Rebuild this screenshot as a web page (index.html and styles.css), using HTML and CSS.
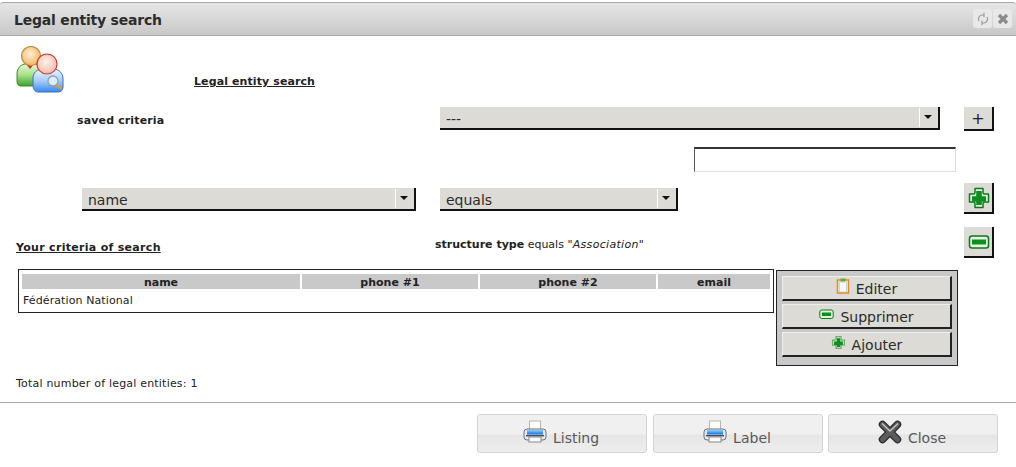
FILE: index.html
```html
<!DOCTYPE html>
<html lang="en">
<head>
<meta charset="utf-8">
<title>Legal entity search</title>
<link rel="stylesheet" href="styles.css">
</head>
<body>
<header class="titlebar">
  <h1 class="title">Legal entity search</h1>
  <div class="win-actions">
    <span class="win-btn"><svg width="14" height="14" viewBox="0 0 14 14"><path d="M3 9A4 4 0 0 1 6 3h2.500M11 5A4 4 0 0 1 8 11H5.500M8 .8v4.400M6 8.800v4.400" fill="none" stroke="#9a9a9a" stroke-width="1.200"/></svg></span>
    <span class="win-btn"><svg width="12" height="12" viewBox="0 0 12 12"><path d="M2 2l8 8M10 2l-8 8" stroke="#8a8a8a" stroke-width="3.200"/></svg></span>
  </div>
</header>
<main class="content">
  <div class="row row-head">
    <svg class="people" width="48" height="48" viewBox="0 0 48 48">
      <defs>
        <linearGradient id="g1" x1="0" y1="0" x2="0" y2="1"><stop offset="0" stop-color="#eaf8de"/><stop offset=".5" stop-color="#a8e088"/><stop offset="1" stop-color="#3fa030"/></linearGradient>
        <linearGradient id="g2" x1="0" y1="0" x2="0" y2="1"><stop offset="0" stop-color="#eef5ff"/><stop offset=".5" stop-color="#a8cdfb"/><stop offset="1" stop-color="#3a88f0"/></linearGradient>
        <radialGradient id="g3" cx=".45" cy=".4"><stop offset="0" stop-color="#fff0d4"/><stop offset="1" stop-color="#f4c078"/></radialGradient>
        <radialGradient id="g4" cx=".45" cy=".4"><stop offset="0" stop-color="#fff2ec"/><stop offset="1" stop-color="#f7c4b4"/></radialGradient>
      </defs>
      <path d="M1 35V28c0-6 4-10 9-10h8c6 0 10 4 10 10v8c0 3-2 4-4 4H5c-3 0-4-2-4-5z" fill="url(#g1)" stroke="#3f8a32"/>
      <path d="M10 18h8l-4 5z" fill="#d03020"/>
      <circle cx="15" cy="10" r="9.500" fill="url(#g3)" stroke="#c58a3a" stroke-width="1.200"/>
      <path d="M17 39V32c0-5 4-9 9-9h11c6 0 10 4 10 10v8c0 3-2 5-5 5H22c-3 0-5-3-5-7z" fill="url(#g2)" stroke="#3a70c0"/>
      <circle cx="31" cy="18" r="10" fill="url(#g4)" stroke="#d83a30" stroke-width="1.200"/>
      <circle cx="37" cy="35" r="5" fill="#dcecf8" stroke="#8aa0b5" stroke-width="1.300"/>
      <path d="M40.500 38.500l5 4.500" stroke="#e8a020" stroke-width="2.200"/>
    </svg>
    <h2 class="heading heading-main">Legal entity search</h2>
  </div>

  <div class="row row-saved">
    <span class="label">saved criteria</span>
    <div class="select select-wide"><span class="select-value">---</span><span class="select-arrow"></span></div>
    <button class="tool tool-small" type="button">+</button>
  </div>

  <div class="row row-input">
    <div class="textbox"></div>
  </div>

  <div class="row row-criteria">
    <div class="select select-field"><span class="select-value">name</span><span class="select-arrow"></span></div>
    <div class="select select-op"><span class="select-value">equals</span><span class="select-arrow"></span></div>
    <button class="tool tool-large" type="button">
      <svg width="24" height="24" viewBox="0 0 24 24"><path d="M8 2.500h8v4c0 1 .5 1.500 1.500 1.500h4v8h-4c-1 0-1.500.5-1.500 1.500v4H8v-4c0-1-.5-1.500-1.500-1.500h-4V8h4c1 0 1.500-.5 1.500-1.500z" fill="#e8f5e4" stroke="#0a7a18" stroke-width="1.500" stroke-linejoin="round"/><path d="M9.200 5h5.600v5.200H19v5.600h-4.200V19H9.200v-3.200H5v-5.600h4.200z" fill="#0c8f1e"/></svg>
    </button>
  </div>

  <div class="row row-summary">
    <h2 class="heading heading-criteria">Your criteria of search</h2>
    <p class="summary"><b>structure type</b> equals <i>"Association"</i></p>
    <button class="tool tool-large" type="button">
      <svg width="22" height="16" viewBox="0 0 22 16"><rect x="1.500" y="2" width="19" height="12" rx="2.500" fill="#e8f5e4" stroke="#0a7a18" stroke-width="1.500"/><rect x="4" y="5.500" width="14" height="5" fill="#0c8f1e"/></svg>
    </button>
  </div>

  <div class="row row-results">
    <div class="results">
      <table class="grid">
        <thead>
          <tr><th class="col-name">name</th><th class="col-phone">phone #1</th><th class="col-phone">phone #2</th><th class="col-email">email</th></tr>
        </thead>
        <tbody>
          <tr><td>Fédération National</td><td></td><td></td><td></td></tr>
        </tbody>
      </table>
    </div>
    <div class="actions">
      <button class="action" type="button">
        <svg width="14" height="16" viewBox="0 0 14 16"><rect x="1.500" y="2" width="11" height="13" fill="#fff6e0" stroke="#e08a20" stroke-width="1.500"/><rect x="3.500" y="4" width="7" height="10" fill="#f4f8ff" stroke="#a8b8d0" stroke-width=".6"/><rect x="4.500" y="0.500" width="5" height="3" fill="#5cb040"/></svg>
        Editer
      </button>
      <button class="action" type="button">
        <svg width="15" height="11" viewBox="0 0 15 11"><rect x=".8" y="1" width="13.400" height="8.500" rx="2" fill="#e0f2dc" stroke="#0a7a18"/><rect x="3" y="3.500" width="9" height="3.500" fill="#0c8f1e"/></svg>
        Supprimer
      </button>
      <button class="action" type="button">
        <svg width="15" height="15" viewBox="0 0 24 24"><path d="M8 2.500h8v4c0 1 .5 1.500 1.500 1.500h4v8h-4c-1 0-1.500.5-1.500 1.500v4H8v-4c0-1-.5-1.500-1.500-1.500h-4V8h4c1 0 1.500-.5 1.500-1.500z" fill="#cfe6cc" stroke="#6fae72" stroke-width="2"/><path d="M9.200 5h5.600v5.200H19v5.600h-4.200V19H9.200v-3.200H5v-5.600h4.200z" fill="#0c8f1e"/></svg>
        Ajouter
      </button>
    </div>
  </div>

  <p class="total">Total number of legal entities: 1</p>
</main>
<footer class="footer">
  <button class="foot-btn" type="button">
    <svg width="24" height="24" viewBox="0 0 24 24"><use href="#printer"/></svg>
    <span>Listing</span>
  </button>
  <button class="foot-btn" type="button">
    <svg width="24" height="24" viewBox="0 0 24 24"><use href="#printer"/></svg>
    <span>Label</span>
  </button>
  <button class="foot-btn" type="button">
    <svg width="24" height="24" viewBox="0 0 24 24"><path d="M4.500 4.500L19.500 19.500M19.500 4.500L4.500 19.500" stroke="#2e2e2e" stroke-width="7.500" stroke-linecap="round"/><path d="M4.500 4.500L19.500 19.500M19.500 4.500L4.500 19.500" stroke="#5c5c5c" stroke-width="5" stroke-linecap="round"/><path d="M4 3.500L12 11l8-7.500" fill="none" stroke="#c4c4c4" stroke-width="1.300"/></svg>
    <span>Close</span>
  </button>
</footer>
<svg class="defs" width="0" height="0">
  <defs>
    <linearGradient id="ink" x1="0" y1="0" x2="0" y2="1"><stop offset="0" stop-color="#8fd0fa"/><stop offset="1" stop-color="#0c6fe8"/></linearGradient>
  </defs>
  <symbol id="printer" viewBox="0 0 24 24">
    <rect x="6.500" y="1" width="11" height="10" fill="#fdfdf6" stroke="#b5b5b5"/>
    <rect x="1" y="9" width="22" height="11" rx="3" fill="#e4e8ee" stroke="#6a7280"/>
    <rect x="4" y="10" width="16" height="4.500" fill="url(#ink)"/>
    <rect x="3" y="15" width="18" height="1.400" fill="#4a4a4a"/>
    <rect x="6" y="17" width="12" height="5" fill="#fafafa" stroke="#8a8a8a"/>
  </symbol>
</svg>
</body>
</html>
```
FILE: styles.css
```css
* { box-sizing: border-box; }
html, body { margin: 0; padding: 0; height: 467px; overflow: hidden; background: #fff; }
body { font-family: "DejaVu Sans", sans-serif; font-size: 11px; color: #222; }
button { font-family: inherit; padding: 0; cursor: default; }

.titlebar {
  height: 34px;
  margin-top: 2px;
  padding: 2px 4px 0 14px;
  display: flex;
  align-items: center;
  justify-content: space-between;
  background: linear-gradient(#e6e6e6, #c8c8c8);
  border-top: 1px solid #aaa;
  border-bottom: 1px solid #aaa;
  border-radius: 3px 3px 0 0;
}
.title { margin: 0; font-size: 14px; font-weight: bold; color: #2c2c2c; letter-spacing: -.2px; }
.win-actions { display: flex; gap: 1px; margin-top: -3px; }
.win-btn {
  width: 19px; height: 19px;
  display: flex; align-items: center; justify-content: center;
  background: #e8e8e8; border-radius: 3px;
}

.content { height: 366px; display: flow-root; }
.row { display: flex; }
.label, .heading, .summary b { font-weight: bold; }

.row-head { height: 71px; padding: 10px 0 0 16px; }
.people { flex: none; }
.heading {
  margin: 0; font-size: 11px; font-weight: bold; color: #222;
  text-decoration: underline;
}
.heading-main { margin: 29px 0 0 130px; letter-spacing: .1px; }

.row-saved { height: 26px; padding-left: 77px; align-items: flex-start; }
.label { width: 363px; padding-top: 7px; letter-spacing: .14px; }

.select {
  height: 23px;
  display: flex;
  align-items: center;
  justify-content: space-between;
  background: #dcdbd5;
  border-right: 2px solid #111;
  border-bottom: 2px solid #111;
  font-size: 14px;
  color: #2b2b2b;
}
.select-value { padding: 2px 0 0 6px; }
.select-arrow {
  position: relative;
  width: 19px; height: 19px;
  border-left: 1px solid #fff;
  flex: none;
}
.select-arrow::after {
  content: "";
  position: absolute; left: 4px; top: 7px;
  border: 4.5px solid transparent;
  border-top: 4px solid #111;
  border-bottom: 0;
}
.select-wide { width: 500px; }
.select-field { width: 334px; }
.select-op { width: 238px; margin-left: 24px; }

.tool {
  flex: none;
  width: 30px;
  margin-left: 24px;
  display: flex; align-items: center; justify-content: center;
  background: #dcdbd5;
  border: 0;
  border-right: 2px solid #111;
  border-bottom: 2px solid #111;
  color: #222;
}
.tool-small { height: 24px; font-size: 16px; }
.tool-large { height: 31px; padding-left: 2px; }

.row-input { height: 50px; padding: 14px 0 0 694px; }
.textbox {
  width: 262px; height: 25px;
  border-top: 2px solid #333;
  border-left: 1px solid #555;
  border-right: 1px solid #ddd;
  border-bottom: 1px solid #ddd;
}

.row-criteria { height: 44px; padding: 0 0 0 82px; align-items: flex-start; }
.row-criteria .select { margin-top: 5px; }
.row-criteria .tool { margin-left: 286px; }

.row-summary { height: 43px; padding-left: 16px; align-items: flex-start; }
.heading-criteria { width: 419px; padding-top: 14px; letter-spacing: .3px; }
.summary { margin: 0; width: 529px; padding-top: 11px; }
.summary i { letter-spacing: .3px; }
.row-summary .tool { margin-left: 0; }

.row-results { height: 107px; padding-left: 18px; align-items: flex-start; }
.results { width: 756px; height: 44px; margin-top: -1px; border: 1px solid #222; padding: 4px 3px 0; }
.grid { width: 100%; border-collapse: separate; border-spacing: 0; table-layout: fixed; }
.grid th {
  height: 15px; padding: 1px 0 0;
  background: #c9c9c9; font-size: 11px; color: #222;
  border-right: 2px solid #fff;
}
.grid th:last-child { border-right: 0; }
.grid td { height: 21px; padding: 2px 1px 0; font-size: 11px; color: #222; white-space: nowrap; letter-spacing: .1px; }
.col-name { width: 280px; }
.col-phone { width: 178px; }

.actions {
  width: 182px; height: 96px;
  margin-left: 2px;
  padding: 5px 5px 0;
  display: flex; flex-direction: column; gap: 3px;
  background: #c8c8c8;
  border: 1px solid #222;
}
.action {
  height: 25px;
  padding-top: 2px;
  display: flex; align-items: center; justify-content: center; gap: 6px;
  background: #dcdbd5;
  border: 0;
  border-top: 1px solid #eee;
  border-left: 1px solid #eee;
  border-right: 2px solid #222;
  border-bottom: 2px solid #222;
  font-size: 14px; color: #2b2b2b;
}
.action svg { margin-top: -6px; }

.total { margin: 0; padding-left: 16px; font-size: 11px; letter-spacing: .2px; }

.footer {
  height: 64px;
  border-top: 1px solid #aaa;
  padding: 11px 18px 0 0;
  display: flex; justify-content: flex-end; gap: 5px; align-items: flex-start;
}
.foot-btn {
  width: 170px; height: 39px;
  padding-right: 2px;
  display: flex; align-items: center; justify-content: center; gap: 6px;
  background: linear-gradient(#f0f0f0 50%, #e6e6e6 55%, #eeeeee);
  border: 1px solid #d4d4d4;
  border-radius: 3px;
  font-size: 14px; color: #5a5a5a;
}
.foot-btn:first-child { margin-right: 1px; }
.foot-btn span { padding-top: 8px; }
.foot-btn svg { margin-top: -3px; }
.defs { position: absolute; }
```
